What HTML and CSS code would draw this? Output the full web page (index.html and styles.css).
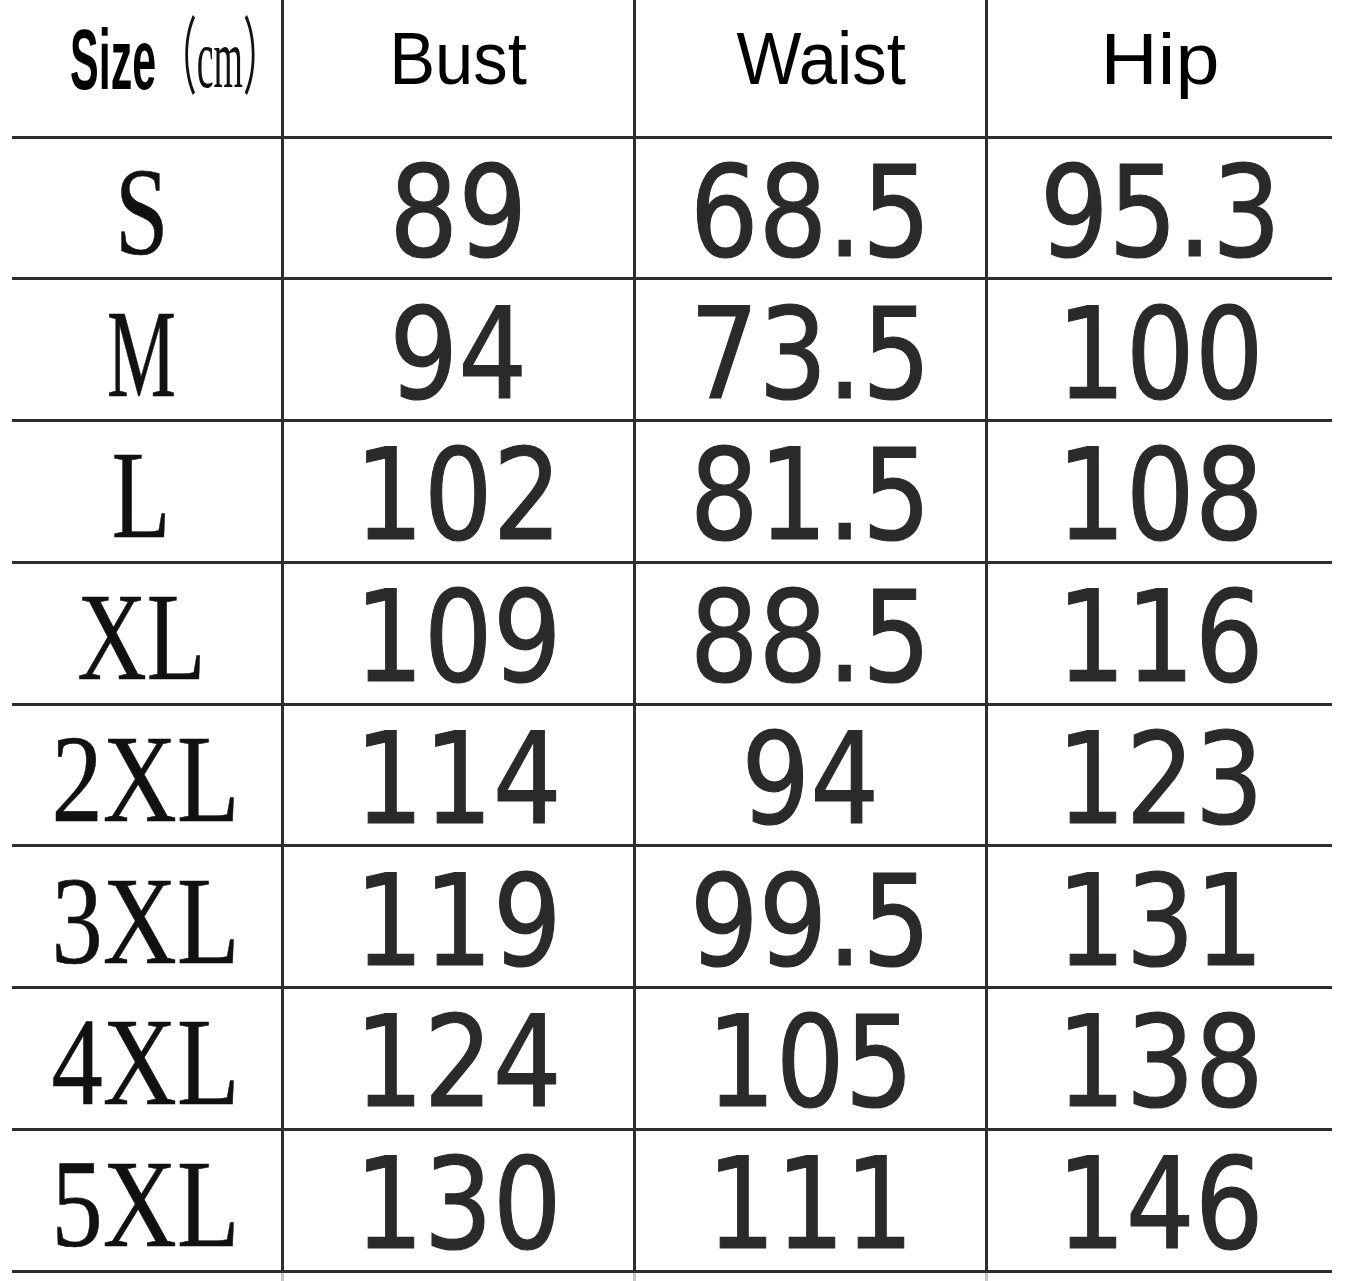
FILE: index.html
```html
<!DOCTYPE html>
<html lang="en">
<head>
<meta charset="utf-8">
<title>Size chart</title>
<link rel="stylesheet" href="styles.css">
</head>
<body>
<div class="chart">
  <div class="cell head first"><span class="size-word">Size</span><span class="unit">（cm）</span></div>
  <div class="cell head"><span class="htxt">Bust</span></div>
  <div class="cell head"><span class="htxt waist">Waist</span></div>
  <div class="cell head"><span class="htxt hip">Hip</span></div>

  <div class="cell lbl first"><span class="stxt">S</span></div>
  <div class="cell num"><span class="ntxt">89</span></div>
  <div class="cell num"><span class="ntxt">68.5</span></div>
  <div class="cell num"><span class="ntxt">95.3</span></div>

  <div class="cell lbl first"><span class="stxt m">M</span></div>
  <div class="cell num"><span class="ntxt">94</span></div>
  <div class="cell num"><span class="ntxt">73.5</span></div>
  <div class="cell num"><span class="ntxt">100</span></div>

  <div class="cell lbl first"><span class="stxt">L</span></div>
  <div class="cell num"><span class="ntxt">102</span></div>
  <div class="cell num"><span class="ntxt">81.5</span></div>
  <div class="cell num"><span class="ntxt">108</span></div>

  <div class="cell lbl first"><span class="stxt">XL</span></div>
  <div class="cell num"><span class="ntxt">109</span></div>
  <div class="cell num"><span class="ntxt">88.5</span></div>
  <div class="cell num"><span class="ntxt">116</span></div>

  <div class="cell lbl first"><span class="stxt wide">2XL</span></div>
  <div class="cell num"><span class="ntxt">114</span></div>
  <div class="cell num"><span class="ntxt">94</span></div>
  <div class="cell num"><span class="ntxt">123</span></div>

  <div class="cell lbl first"><span class="stxt wide">3XL</span></div>
  <div class="cell num"><span class="ntxt">119</span></div>
  <div class="cell num"><span class="ntxt">99.5</span></div>
  <div class="cell num"><span class="ntxt">131</span></div>

  <div class="cell lbl first"><span class="stxt wide">4XL</span></div>
  <div class="cell num"><span class="ntxt">124</span></div>
  <div class="cell num"><span class="ntxt">105</span></div>
  <div class="cell num"><span class="ntxt">138</span></div>

  <div class="cell lbl first"><span class="stxt wide">5XL</span></div>
  <div class="cell num"><span class="ntxt">130</span></div>
  <div class="cell num"><span class="ntxt">111</span></div>
  <div class="cell num"><span class="ntxt">146</span></div>

  <div class="tail first"></div>
  <div class="tail"></div>
  <div class="tail"></div>
  <div class="tail"></div>
</div>
</body>
</html>
```

FILE: styles.css
```css
html, body {
  margin: 0;
  padding: 0;
  background: #ffffff;
}

body {
  width: 1351px;
  height: 1281px;
  overflow: hidden;
}

.chart {
  display: grid;
  grid-template-columns: 269px 352px 352px 347px;
  grid-template-rows: 138.5px repeat(8, 141.75px) 8px;
  margin-left: 12px;
}

.cell {
  box-sizing: border-box;
  border-bottom: 3px solid #2e2e2e;
  border-left: 3px solid #2e2e2e;
  display: flex;
  align-items: center;
  justify-content: center;
  overflow: visible;
  white-space: nowrap;
}

.cell.first {
  border-left: none;
}

.tail {
  border-left: 3px solid #c8c8c8;
}

.tail.first {
  border-left: none;
}

/* header */
.head {
  padding-bottom: 18px;
}

.htxt {
  font-family: "Liberation Sans", Arial, sans-serif;
  font-size: 74px;
  color: #000;
  line-height: 1;
  display: inline-block;
  transform: scaleX(0.93);
}

.htxt.waist {
  margin-left: 22px;
}

.htxt.hip {
  transform: scaleX(1.1);
  font-size: 72px;
}

.head.first {
  justify-content: flex-start;
  padding-left: 58px;
}

.size-word {
  font-family: "Liberation Sans", Arial, sans-serif;
  font-weight: bold;
  font-size: 86px;
  line-height: 1;
  color: #000;
  display: inline-block;
  transform: scaleX(0.5);
  transform-origin: left center;
  width: 84px;
}

.unit {
  font-family: "Liberation Serif", "Noto Sans CJK SC", serif;
  font-size: 84px;
  line-height: 1;
  color: #111;
  display: inline-block;
  transform: scaleX(0.45);
  transform-origin: left center;
  margin-left: 5px;
}

/* size labels */
.lbl {
  padding-top: 9px;
  padding-right: 10px;
}

.stxt {
  font-family: "Liberation Serif", "Times New Roman", serif;
  font-size: 125px;
  line-height: 1;
  color: #111;
  display: inline-block;
  transform: scaleX(0.77);
  -webkit-text-stroke: 0.6px #111;
}

.stxt.m {
  transform: scaleX(0.62);
}

.stxt.wide {
  transform: scaleX(0.82);
  margin-left: 9px;
}

/* numbers */
.num {
  padding-top: 10px;
}

.ntxt {
  font-family: "DejaVu Sans", Verdana, sans-serif;
  font-size: 126px;
  line-height: 1;
  color: #2a2a2a;
  display: inline-block;
  transform: scaleX(0.86);
  -webkit-text-stroke: 1.2px #2a2a2a;
}
```
